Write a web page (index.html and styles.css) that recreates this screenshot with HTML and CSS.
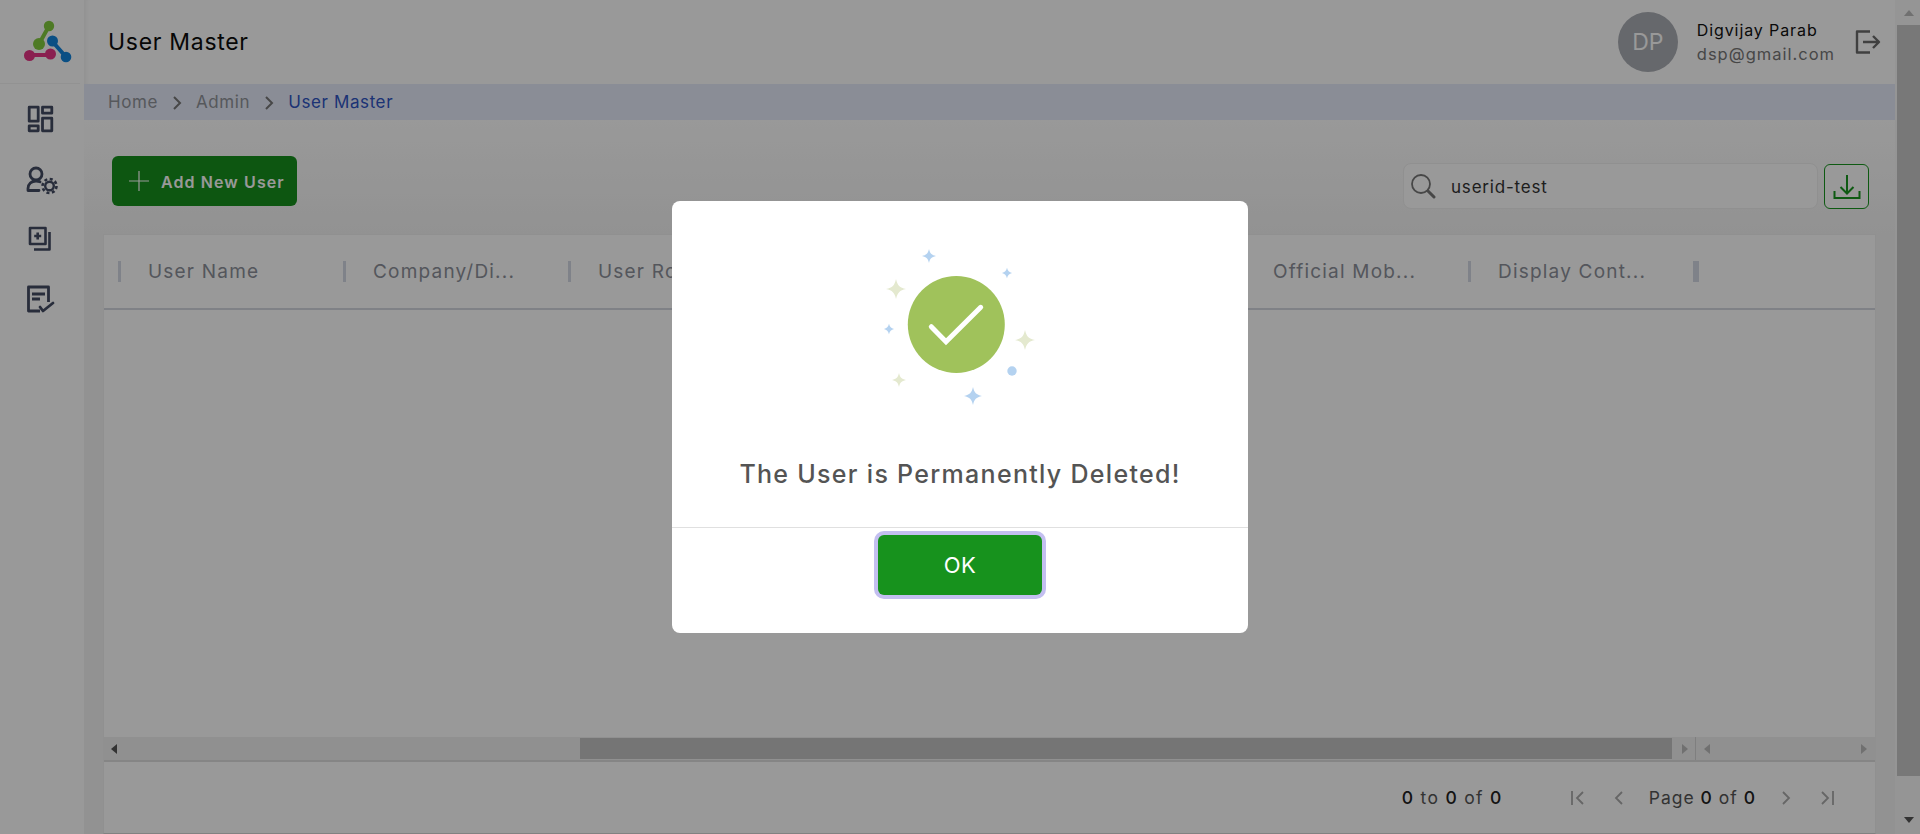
FILE: index.html
```html
<!DOCTYPE html>
<html lang="en">

<head>
    <meta charset="UTF-8">
    <meta name="viewport" content="width=device-width, initial-scale=1.0">
    <title>User Master</title>
    <link rel="stylesheet" href="styles.css">
</head>

<body>
    <svg class="defs" width="0" height="0">
        <symbol id="spark" viewBox="-10 -10 20 20">
            <path d="M0-10C1.500-3.500 3.500-1.500 10 0 3.500 1.500 1.500 3.500 0 10-1.500 3.500-3.500 1.500-10 0-3.500-1.500-1.500-3.500 0-10Z" />
        </symbol>
    </svg>

    <div class="app">
        <aside class="sidebar">
            <div class="logo">
                <svg width="80" height="83" viewBox="0 0 80 83" fill="none" stroke-linecap="round">
                    <path d="M49 26 39 44" stroke="#83cb3f" stroke-width="4" />
                    <circle cx="49" cy="26" r="5.2" fill="#83cb3f" />
                    <circle cx="39" cy="44" r="6" fill="#83cb3f" />
                    <path d="M29 55H50" stroke="#e63585" stroke-width="4" />
                    <circle cx="29.5" cy="55.5" r="5.5" fill="#e63585" />
                    <circle cx="50.5" cy="54" r="5.5" fill="#e63585" />
                    <path d="M52 41 66 57" stroke="#1284dd" stroke-width="4" />
                    <circle cx="52.5" cy="41" r="5.5" fill="#1284dd" />
                    <circle cx="66" cy="57" r="5.3" fill="#1284dd" />
                </svg>
            </div>
            <nav class="side-nav">
                <svg class="side-icon" width="32" height="32" viewBox="0 0 32 32">
                    <path d="M5.2 4.2h9v14h-9zM5.200 22.800h9v5h-9zM18.500 4.200h9.300v6h-9.300zM18.500 15.200h9.300v12.600h-9.300z" />
                </svg>
                <svg class="side-icon" width="34" height="34" viewBox="0 0 34 34">
                    <circle cx="12" cy="12" r="6" />
                    <path d="M4 28.500v-2c0-4.500 3.500-7.500 8-7.500 1.500 0 2.700.2 4 .8M4 28.500h11" stroke-linecap="round" />
                    <circle cx="25.500" cy="24" r="4.300" stroke-width="2.400" />
                    <circle cx="25.500" cy="24" r="7" stroke-width="2.600" stroke-dasharray="3 2.500" />
                </svg>
                <svg class="side-icon thin" width="32" height="32" viewBox="0 0 32 32">
                    <path d="M6 5h15.500v16H6z" />
                    <path d="M25.500 9v17.500H10" />
                    <path d="M13.700 9.500v7M10.200 13h7" />
                </svg>
                <svg class="side-icon" width="34" height="34" viewBox="0 0 34 34">
                    <path d="M16 29H4.500V5h20v15" />
                    <path d="M8 12h13M8 17h8" />
                    <path d="M16 25l3 4 10-8" stroke-linecap="round" />
                </svg>
            </nav>
        </aside>

        <div class="main">
            <header class="topbar">
                <h1 class="page-title">User Master</h1>
                <div class="user-box">
                    <div class="avatar">DP</div>
                    <div class="user-info">
                        <span class="user-name">Digvijay Parab</span>
                        <span class="user-mail">dsp@gmail.com</span>
                    </div>
                    <svg class="logout" width="26" height="24" viewBox="0 0 26 24" fill="none">
                        <path d="M15 1.500H2v21h13" />
                        <path d="M8 12h16M18 6l6 6-6 6" />
                    </svg>
                </div>
            </header>

            <div class="crumbs">
                <span>Home</span>
                <svg class="crumb-arrow" width="9" height="14" viewBox="0 0 9 14" fill="none"><path d="M1 1l6 6-6 6" /></svg>
                <span>Admin</span>
                <svg class="crumb-arrow" width="9" height="14" viewBox="0 0 9 14" fill="none"><path d="M1 1l6 6-6 6" /></svg>
                <span class="crumb-active">User Master</span>
            </div>

            <section class="content">
                <div class="toolbar">
                    <button class="add-btn">
                        <svg width="22" height="22" viewBox="0 0 22 22"><path d="M11 1v20M1 11h20" /></svg>
                        <span class="add-label">Add New User</span>
                    </button>
                    <div class="search">
                        <svg width="26" height="26" viewBox="0 0 26 26" fill="none">
                            <circle cx="11" cy="11" r="9" />
                            <path class="handle" d="M18 18l6 6" />
                        </svg>
                        <input class="search-input" type="text" value="userid-test">
                    </div>
                    <button class="download-btn">
                        <svg width="28" height="28" viewBox="0 0 28 28" fill="none">
                            <path d="M14 2v18M7.500 14l6.500 6.500 6.500-6.500" />
                            <path d="M1.500 18v7h25v-7" />
                        </svg>
                    </button>
                </div>

                <div class="grid">
                    <div class="grid-head">
                        <div class="col">User Name</div>
                        <div class="col">Company/Di...</div>
                        <div class="col">User Role</div>
                        <div class="col">Employee ID</div>
                        <div class="col">Official Email</div>
                        <div class="col">Official Mob...</div>
                        <div class="col">Display Cont...</div>
                        <div class="col-end"></div>
                    </div>
                    <div class="grid-body"></div>
                    <div class="hscroll">
                        <div class="hscroll-main">
                            <span class="arrow-left dark"></span>
                            <div class="hscroll-track"><div class="hscroll-thumb"></div></div>
                            <span class="arrow-right"></span>
                        </div>
                        <div class="hscroll-side">
                            <span class="arrow-left"></span>
                            <span class="arrow-right"></span>
                        </div>
                    </div>
                    <div class="pager">
                        <div class="pager-count"><b>0</b> to <b>0</b> of <b>0</b></div>
                        <div class="pager-nav">
                            <svg width="14" height="16" viewBox="0 0 14 16"><path d="M1 1v14M12 2L6 8l6 6" /></svg>
                            <svg width="11" height="16" viewBox="0 0 11 16"><path d="M9 2L3 8l6 6" /></svg>
                            <div class="pager-page">Page <b>0</b> of <b>0</b></div>
                            <svg width="11" height="16" viewBox="0 0 11 16"><path d="M2 2l6 6-6 6" /></svg>
                            <svg width="14" height="16" viewBox="0 0 14 16"><path d="M13 1v14M2 2l6 6-6 6" /></svg>
                        </div>
                    </div>
                </div>
            </section>
        </div>

        <div class="vscroll">
            <span class="vs-up"></span>
            <div class="vs-thumb"></div>
            <span class="vs-down"></span>
        </div>
    </div>

    <div class="overlay">
        <div class="modal">
            <svg class="modal-icon" width="240" height="190" viewBox="0 0 240 190" fill="none">
                <use href="#spark" class="blue" x="82" y="19" width="14" height="14" />
                <use href="#spark" class="blue" x="161.500" y="37.500" width="11" height="11" />
                <use href="#spark" class="sand" x="46" y="49" width="20" height="20" />
                <use href="#spark" class="blue" x="43.500" y="93.500" width="11" height="11" />
                <use href="#spark" class="sand" x="175" y="100" width="20" height="20" />
                <use href="#spark" class="sand" x="52" y="143" width="14" height="14" />
                <use href="#spark" class="blue" x="124" y="157" width="18" height="18" />
                <circle cx="172" cy="141" r="4.700" fill="#b4d2f0" />
                <circle cx="116.300" cy="94.500" r="48.500" fill="#a0c25b" />
                <path d="M91.300 96.700l14.700 15 34.700-34.400" stroke="#fff" stroke-width="5" stroke-linecap="round" />
            </svg>
            <h2 class="modal-title">The User is Permanently Deleted!</h2>
            <div class="modal-actions">
                <button class="ok-btn">OK</button>
            </div>
        </div>
    </div>
</body>

</html>
```

FILE: styles.css
```css
* {
    box-sizing: border-box;
}

html,
body {
    margin: 0;
    height: 100%;
    overflow: hidden;
}

body {
    background-color: #fff;
    font-family: Inter, "Open Sans", sans-serif;
    color: #222;
}

.defs {
    display: none;
}

.app {
    display: flex;
    height: 834px;
}

/* sidebar */
.sidebar {
    flex: 0 0 84px;
    min-width: 0;
    background-color: #fff;
}

.logo {
    height: 84px;
    border-bottom: 1px solid #f4f4f4;
    margin-right: 4px;
}

.logo svg {
    display: block;
}

.side-nav {
    display: flex;
    flex-direction: column;
    padding: 19px 0 0 24px;
    gap: 27px;
}

.side-icon {
    fill: none;
    stroke: #434b63;
    stroke-width: 2.8;
    stroke-linejoin: round;
}

.side-icon.thin {
    stroke-width: 2.6;
}

/* main column */
.main {
    flex: 1;
    display: flex;
    flex-direction: column;
    min-width: 0;
}

.topbar {
    flex: 0 0 84px;
    display: flex;
    justify-content: space-between;
    align-items: center;
    padding: 0 14px 0 24px;
    box-shadow: inset 5px 0 4px -3px #f2f2f2;
}

.page-title {
    margin: 0;
    font-size: 23px;
    font-weight: 400;
    letter-spacing: 0.7px;
    color: #0c0c0c;
}

.user-box {
    display: flex;
    align-items: center;
}

.avatar {
    width: 60px;
    height: 60px;
    border-radius: 50%;
    background-color: #aaadb4;
    color: #fff;
    font-size: 23px;
    display: flex;
    align-items: center;
    justify-content: center;
    margin-right: 19px;
}

.user-info {
    display: flex;
    flex-direction: column;
    gap: 3px;
    margin-right: 20px;
}

.user-name {
    font-size: 16px;
    line-height: 21px;
    letter-spacing: 0.9px;
    color: #111;
}

.user-mail {
    font-size: 16.5px;
    line-height: 21px;
    letter-spacing: 1px;
    color: #777;
}

.logout {
    stroke: #6c6c6c;
    stroke-width: 2.4;
    stroke-linejoin: round;
}

.crumbs {
    flex: 0 0 36px;
    background-color: #e6ebfa;
    display: flex;
    align-items: center;
    padding-left: 24px;
    font-size: 17px;
    letter-spacing: 0.6px;
    color: #909399;
}

.crumb-arrow {
    stroke: #777;
    stroke-width: 2;
    margin: 2px 14.5px 0;
}

.crumb-active {
    color: #2f55c4;
}

.content {
    flex: 1;
    min-height: 0;
    display: flex;
    flex-direction: column;
    padding: 36px 19px 0;
    background: linear-gradient(#fff, #f4f4f4 114px);
}

.toolbar {
    flex: none;
    height: 50px;
    display: flex;
    align-items: flex-start;
    padding: 0 7px 0 9px;
    margin-bottom: 28px;
}

.add-btn {
    width: 185px;
    height: 50px;
    display: flex;
    align-items: center;
    gap: 11px;
    padding: 0 0 0 16px;
    border: none;
    border-radius: 6px;
    background-color: #17901d;
    color: #fff;
    font-family: inherit;
    font-size: 16px;
    font-weight: 600;
    letter-spacing: 1.1px;
    margin-right: auto;
}

.add-label {
    padding-top: 2px;
}

.add-btn svg {
    stroke: #fff;
    stroke-width: 1.2;
}

.search {
    width: 415px;
    height: 46px;
    margin-top: 7px;
    display: flex;
    align-items: center;
    gap: 15px;
    padding-left: 6px;
    background-color: #fff;
    border: 1px solid #f0f0f0;
    border-radius: 8px;
}

.search svg {
    stroke: #777;
    stroke-width: 1.8;
}

.search .handle {
    stroke-width: 3;
    stroke-linecap: round;
}

.search-input {
    flex: 1;
    min-width: 0;
    border: none;
    outline: none;
    background: none;
    padding: 2px 0 0;
    font-family: inherit;
    font-size: 17px;
    letter-spacing: 0.8px;
    color: #333;
}

.download-btn {
    width: 45px;
    height: 45px;
    margin: 8px 0 0 6px;
    padding: 0;
    display: flex;
    align-items: center;
    justify-content: center;
    background-color: #fff;
    border: 1px solid #18961f;
    border-radius: 6px;
}

.download-btn svg {
    stroke: #18961f;
    stroke-width: 2;
}

/* table */
.grid {
    flex: 1;
    min-height: 0;
    display: flex;
    flex-direction: column;
    background-color: #fff;
    border: 1px solid #f0f0f0;
    border-bottom-color: #d8d8d8;
}

.grid-head {
    flex: 0 0 75px;
    display: flex;
    align-items: center;
    padding-left: 14px;
    border-bottom: 2px solid #d4d7e0;
}

.col {
    flex: 0 0 225px;
    height: 21px;
    line-height: 21px;
    padding-left: 27px;
    border-left: 3px solid #d4d9e4;
    font-size: 19px;
    letter-spacing: 1.2px;
    color: #8c9099;
    white-space: nowrap;
}

.col-end {
    width: 6px;
    height: 21px;
    background-color: #d4d9e4;
}

.grid-body {
    flex: 1;
}

.hscroll {
    flex: 0 0 25px;
    display: flex;
    background-color: #f0f0f0;
    border-bottom: 2px solid #dedede;
}

.hscroll-main {
    width: 1592px;
    display: flex;
    align-items: center;
    border-right: 1px solid #d4d4d4;
    padding: 0 7px;
}

.hscroll-track {
    flex: 1;
    height: 21px;
    margin: 0 10px 0 0;
    padding-left: 463px;
}

.hscroll-thumb {
    height: 100%;
    background-color: #c3c3c3;
}

.hscroll-side {
    flex: 1;
    display: flex;
    align-items: center;
    justify-content: space-between;
    padding: 0 8px;
}

.arrow-left,
.arrow-right {
    width: 0;
    height: 0;
    border-top: 5.5px solid transparent;
    border-bottom: 5.5px solid transparent;
}

.arrow-left {
    border-right: 6px solid #bbb;
}

.arrow-left.dark {
    border-right-color: #555;
}

.arrow-right {
    border-left: 6px solid #bbb;
}

.pager {
    flex: 0 0 71px;
    display: flex;
    justify-content: flex-end;
    align-items: center;
    padding-right: 41px;
    font-size: 17.5px;
    letter-spacing: 1px;
    color: #555;
}

.pager b {
    font-weight: 500;
    color: #222;
}

.pager-count {
    margin-right: 68px;
    letter-spacing: 1.3px;
}

.pager-nav {
    display: flex;
    align-items: center;
    gap: 28px;
}

.pager-page {
    margin: 0 -3px;
}

.pager-nav svg {
    fill: none;
    stroke: #aaa;
    stroke-width: 1.8;
}

/* page scrollbar */
.vscroll {
    flex: 0 0 25px;
    display: flex;
    flex-direction: column;
    align-items: flex-end;
    background-color: #f8f8f8;
    position: relative;
}

.vs-thumb {
    width: 23px;
    height: 751px;
    margin-top: 25px;
    background-color: #c8c8c8;
}

.vs-up,
.vs-down {
    position: absolute;
    right: 6px;
    width: 0;
    height: 0;
    border-left: 5.5px solid transparent;
    border-right: 5.5px solid transparent;
}

.vs-up {
    top: 10px;
    border-bottom: 6px solid #bbb;
}

.vs-down {
    bottom: 11px;
    border-top: 6px solid #555;
}

/* dialog */
.overlay {
    position: fixed;
    top: 0;
    left: 0;
    right: 0;
    bottom: 0;
    background-color: rgba(0, 0, 0, 0.4);
    display: flex;
    align-items: center;
    justify-content: center;
}

.modal {
    width: 576px;
    height: 432px;
    padding-top: 29px;
    background-color: #fff;
    border-radius: 8px;
    text-align: center;
}

.modal-icon {
    display: block;
    margin: 0 auto;
}

.blue {
    fill: #b4d2f0;
}

.sand {
    fill: #e4e9cf;
}

.modal-title {
    margin: 39px 0 38px;
    font-size: 25px;
    line-height: 30px;
    font-weight: 500;
    letter-spacing: 1.3px;
    color: #545454;
}

.modal-actions {
    border-top: 1px solid #e0e0e0;
    padding-top: 7px;
}

.ok-btn {
    width: 164px;
    height: 60px;
    border: none;
    border-radius: 6px;
    background-color: #17921d;
    color: #fff;
    font-family: inherit;
    font-size: 22px;
    letter-spacing: 0.5px;
    box-shadow: 0 0 0 4px #c3bff0;
}
```
